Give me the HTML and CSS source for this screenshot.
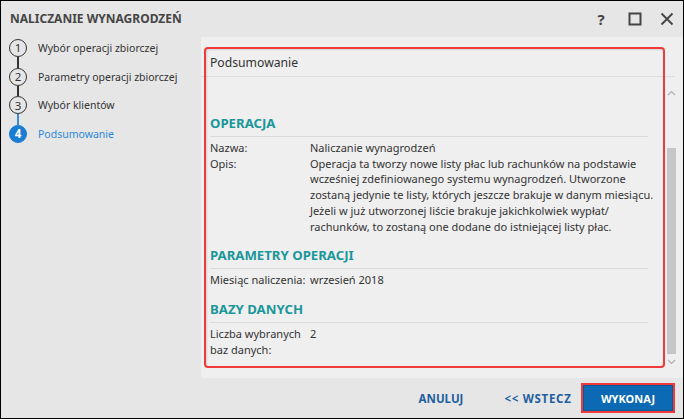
FILE: index.html
```html
<!DOCTYPE html>
<html lang="pl">
<head>
<meta charset="utf-8">
<title>Naliczanie wynagrodzeń</title>
<link rel="stylesheet" href="styles.css">
</head>
<body>
<div class="window">
  <div class="titlebar">
    <div class="title">NALICZANIE WYNAGRODZEŃ</div>
    <div class="win-actions">
      <span class="help">?</span>
      <svg class="ico" width="14" height="14" viewBox="0 0 14 14"><rect x="1.5" y="1.5" width="11" height="11" fill="none" stroke="#444" stroke-width="2"/></svg>
      <svg class="ico" width="14" height="14" viewBox="0 0 14 14"><path d="M1.5 1.5 L12.5 12.5 M12.5 1.5 L1.5 12.5" stroke="#444" stroke-width="1.8" fill="none"/></svg>
    </div>
  </div>
  <div class="body">
    <div class="sidebar">
      <div class="step"><span class="num">1</span><span class="label">Wybór operacji zbiorczej</span></div>
      <div class="conn"></div>
      <div class="step"><span class="num">2</span><span class="label">Parametry operacji zbiorczej</span></div>
      <div class="conn"></div>
      <div class="step"><span class="num">3</span><span class="label">Wybór klientów</span></div>
      <div class="conn conn-active"></div>
      <div class="step step-active"><span class="num">4</span><span class="label">Podsumowanie</span></div>
    </div>
    <div class="panel">
      <div class="panel-head">Podsumowanie</div>
      <div class="panel-body">
        <div class="scroll-content">
          <h2 class="sec-title">OPERACJA</h2>
          <div class="rows">
            <div class="row"><div class="key">Nazwa:</div><div class="val">Naliczanie wynagrodzeń</div></div>
            <div class="row"><div class="key">Opis:</div><div class="val">Operacja ta tworzy nowe listy płac lub rachunków na podstawie<br>wcześniej zdefiniowanego systemu wynagrodzeń. Utworzone<br>zostaną jedynie te listy, których jeszcze brakuje w danym miesiącu.<br>Jeżeli w już utworzonej liście brakuje jakichkolwiek wypłat/<br>rachunków, to zostaną one dodane do istniejącej listy płac.</div></div>
          </div>
          <h2 class="sec-title">PARAMETRY OPERACJI</h2>
          <div class="rows">
            <div class="row"><div class="key">Miesiąc naliczenia:</div><div class="val">wrzesień 2018</div></div>
          </div>
          <h2 class="sec-title">BAZY DANYCH</h2>
          <div class="rows">
            <div class="row"><div class="key">Liczba wybranych<br>baz danych:</div><div class="val">2</div></div>
          </div>
        </div>
        <div class="scrollbar">
          <div class="sb-btn"><svg width="9" height="6" viewBox="0 0 9 6"><path d="M1 5 L4.5 1.5 L8 5" fill="none" stroke="#b0b0b0" stroke-width="1.2"/></svg></div>
          <div class="sb-track"><div class="sb-thumb"></div></div>
          <div class="sb-btn"><svg width="9" height="6" viewBox="0 0 9 6"><path d="M1 1 L4.5 4.5 L8 1" fill="none" stroke="#b0b0b0" stroke-width="1.2"/></svg></div>
        </div>
      </div>
      <div class="highlight"></div>
    </div>
  </div>
  <div class="footer">
    <button class="btn-link">ANULUJ</button>
    <button class="btn-link">&lt;&lt; WSTECZ</button>
    <button class="btn-primary">WYKONAJ</button>
  </div>
</div>
</body>
</html>
```

FILE: styles.css
```css
* { box-sizing: border-box; }
html, body { margin: 0; padding: 0; }
body {
  width: 684px;
  height: 419px;
  font-family: "Noto Sans", "Open Sans", sans-serif;
  color: #333;
  overflow: hidden;
}
.window {
  width: 684px;
  height: 419px;
  border: 1px solid #000;
  background: #e6e6e6;
  display: flex;
  flex-direction: column;
}
.titlebar {
  height: 35px;
  flex: none;
  display: flex;
  align-items: center;
  padding-left: 9px;
  padding-right: 9px;
}
.title {
  font-size: 12px;
  font-weight: 700;
  color: #454545;
  flex: 1;
}
.win-actions {
  display: flex;
  align-items: center;
}
.help {
  font-size: 15px;
  font-weight: 700;
  color: #444;
  width: 10px;
  margin-right: 22px;
  text-align: center;
}
.ico { display: block; margin-left: 18px; }
.win-actions .ico:first-of-type { margin-left: 0; }
.body {
  flex: 1;
  display: flex;
  min-height: 0;
}
.sidebar {
  width: 200px;
  flex: none;
  padding-top: 3px;
  padding-left: 8px;
}
.step {
  display: flex;
  align-items: center;
  height: 18px;
}
.num {
  width: 18px;
  height: 18px;
  border: 1.5px solid #333;
  border-radius: 50%;
  display: flex;
  align-items: center;
  justify-content: center;
  font-size: 11.5px;
  line-height: 1;
  color: #333;
  flex: none;
}
.label {
  margin-left: 11px;
  font-size: 10.5px;
  color: #333;
  white-space: nowrap;
}
.conn {
  width: 1.5px;
  height: 10.7px;
  background: #333;
  margin-left: 8.25px;
}
.conn-active { background: #3a8fd8; }
.step-active .num {
  background: #1a7dd2;
  border-color: #1a7dd2;
  color: #fff;
  font-weight: 700;
}
.step-active .label { color: #2a88d6; }
.panel {
  flex: 1;
  min-width: 0;
  position: relative;
  background: #efefef;
  display: flex;
  flex-direction: column;
  margin-top: 1px;
}
.panel-head {
  height: 40px;
  flex: none;
  margin-right: 9px;
  padding-left: 9px;
  padding-top: 17px;
  font-size: 12.2px;
  border-bottom: 1px solid #dcdcdc;
  color: #333;
}
.panel-body {
  flex: 1;
  display: flex;
  min-height: 0;
  overflow: hidden;
}
.scroll-content {
  flex: 1;
  min-width: 0;
  overflow: hidden;
  padding-left: 9px;
  padding-right: 18px;
  padding-top: 36px;
  font-size: 11px;
  line-height: 15.7px;
}
.sec-title {
  margin: 0;
  font-size: 13.2px;
  font-weight: 700;
  color: #1a979a;
  line-height: 20px;
  padding-bottom: 3px;
  border-bottom: 1px solid #dadada;
}
.rows { padding-top: 3px; margin-bottom: 11px; }
.row { display: flex; }
.key { width: 100px; flex: none; white-space: nowrap; }
.val { flex: 1; white-space: nowrap; }
.scrollbar {
  width: 11px;
  flex: none;
  margin-right: 6px;
  margin-left: 0;
  margin-top: 8px;
  margin-bottom: 8px;
  display: flex;
  flex-direction: column;
}
.sb-btn {
  height: 16px;
  display: flex;
  align-items: center;
  justify-content: center;
  flex: none;
}
.sb-track {
  flex: 1;
  display: flex;
  flex-direction: column;
  justify-content: flex-end;
}
.sb-thumb {
  height: 206px;
  background: #c6c6c6;
  margin: 0 1px;
}
.highlight {
  position: absolute;
  left: 3px;
  top: 10px;
  width: 461px;
  height: 321px;
  border: 2px solid #ee3a3a;
  border-radius: 4px;
  box-shadow: inset 1px 1px 2px rgba(0,0,0,0.12);
  pointer-events: none;
}
.footer {
  height: 40px;
  flex: none;
  display: flex;
  align-items: center;
  justify-content: flex-end;
  padding-right: 10px;
}
.footer button {
  font-family: "Noto Sans", "Open Sans", sans-serif;
  font-size: 11.5px;
  font-weight: 700;
  border: none;
  cursor: pointer;
}
.btn-link {
  background: none;
  color: #1f5f9f;
  width: 80px;
  height: 26px;
  padding: 0;
}
.btn-link + .btn-link { margin-left: 17px; letter-spacing: 0.7px; }
.btn-primary {
  margin-left: 5px;
  width: 90px;
  height: 26px;
  font-size: 11px !important;
  background: #0b6ab3;
  color: #fff;
  outline: 2px solid #ee3a3a;
  box-shadow: inset 0 0 0 1px #0a5a99;
}
```
